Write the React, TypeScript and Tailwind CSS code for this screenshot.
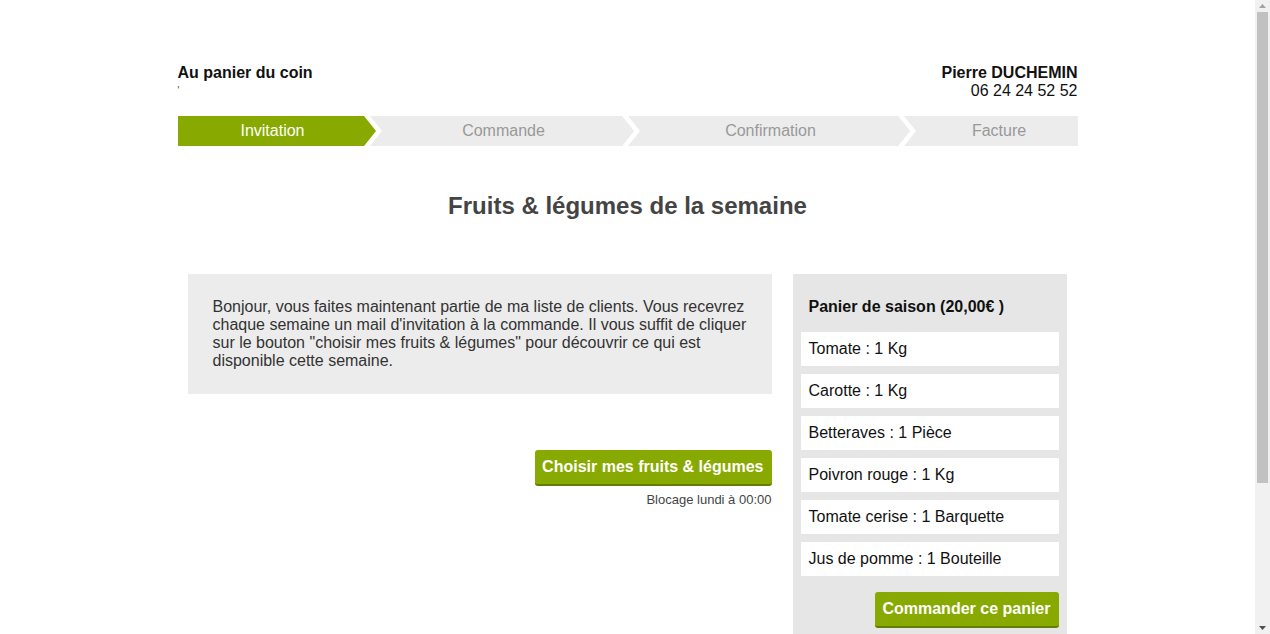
import React from 'react';

const items = [
  'Tomate : 1 Kg',
  'Carotte : 1 Kg',
  'Betteraves : 1 Pièce',
  'Poivron rouge : 1 Kg',
  'Tomate cerise : 1 Barquette',
  'Jus de pomme : 1 Bouteille',
];

function Chevron({ fromGreen = false }: { fromGreen?: boolean }) {
  return (
    <svg width="18" height="30" viewBox="0 0 18 30" className="block shrink-0">
      <rect x="0" y="0" width="18" height="30" fill="#ececec" />
      <polygon points="0,0 6,0 18,15 6,30 0,30 12,15" fill="#ffffff" />
      {fromGreen ? (
        <polygon points="0,0 12,15 0,30" fill="#88aa00" />
      ) : (
        <polygon points="0,0 0,30 12,15" fill="#ececec" />
      )}
    </svg>
  );
}

function Scrollbar() {
  return (
    <div className="flex w-[15px] shrink-0 flex-col items-center bg-[#f1f1f1]">
      <svg width="15" height="12" viewBox="0 0 15 12" className="block">
        <polygon points="4,8 11,8 7.5,4" fill="#a3a3a3" />
      </svg>
      <div className="h-[471px] w-[11px] bg-[#c1c1c1]" />
      <div className="flex-1" />
      <svg width="15" height="12" viewBox="0 0 15 12" className="block">
        <polygon points="4,4 11,4 7.5,8" fill="#505050" />
      </svg>
    </div>
  );
}

export default function App() {
  return (
    <div className="flex h-screen overflow-hidden bg-white text-[16px] leading-[18px] text-[#111] font-['Liberation_Sans',Arial,sans-serif]">
      <div className="flex-1 overflow-hidden">
        <div className="mx-auto w-[900px] pt-[64px]">
          {/* header */}
          <div className="flex justify-between">
            <div>
              <div className="font-bold">Au panier du coin</div>
              <div className="text-[10px] leading-[18px] text-[#6b3d00]">'</div>
            </div>
            <div className="text-right">
              <div className="font-bold">Pierre DUCHEMIN</div>
              <div>06 24 24 52 52</div>
            </div>
          </div>

          {/* steps */}
          <div className="mt-[16px] flex h-[30px] leading-[30px]">
            <div className="w-[186px] bg-[#88aa00] pl-[4px] text-center text-white">Invitation</div>
            <Chevron fromGreen />
            <div className="w-[240px] bg-[#ececec] pl-[4px] text-center text-[#999]">Commande</div>
            <Chevron />
            <div className="w-[258px] bg-[#ececec] pl-[4px] text-center text-[#999]">Confirmation</div>
            <Chevron />
            <div className="flex-1 bg-[#ececec] pl-[5px] text-center text-[#999]">Facture</div>
          </div>

          <h1 className="mt-[46px] text-center text-[24px] leading-[28px] font-bold text-[#444]">
            Fruits &amp; légumes de la semaine
          </h1>

          <div className="mt-[54px] grid grid-cols-[604px_296px]">
            <div className="px-[10px]">
              <div className="bg-[#ececec] px-[25px] pt-[24px] pb-[24px] text-[#333]">
                Bonjour, vous faites maintenant partie de ma liste de clients. Vous recevrez chaque
                semaine un mail d'invitation à la commande. Il vous suffit de cliquer sur le bouton
                "choisir mes fruits &amp; légumes" pour découvrir ce qui est disponible cette semaine.
              </div>
              <div className="mt-[56px] flex flex-col items-end">
                <button className="h-[36px] rounded-[3px] border-b-2 border-[#647d00] bg-[#88aa00] pl-[7px] pr-[8px] font-bold text-white">
                  Choisir mes fruits &amp; légumes
                </button>
                <div className="mt-[6px] text-[13px] leading-[16px] text-[#444]">Blocage lundi à 00:00</div>
              </div>
            </div>

            <div className="px-[11px]">
              <div className="bg-[#e6e6e6] p-2 pb-[40px]">
                <div className="px-2 pt-[16px] pb-[16px] font-bold">Panier de saison (20,00€ )</div>
                <div className="flex flex-col gap-2">
                  {items.map((it) => (
                    <div key={it} className="h-[34px] bg-white px-2 leading-[34px]">
                      {it}
                    </div>
                  ))}
                </div>
                <div className="mt-4 flex justify-end">
                  <button className="h-[36px] rounded-[3px] border-b-2 border-[#647d00] bg-[#88aa00] pl-[7px] pr-[8px] font-bold text-white">
                    Commander ce panier
                  </button>
                </div>
              </div>
            </div>
          </div>
        </div>
      </div>
      <Scrollbar />
    </div>
  );
}
